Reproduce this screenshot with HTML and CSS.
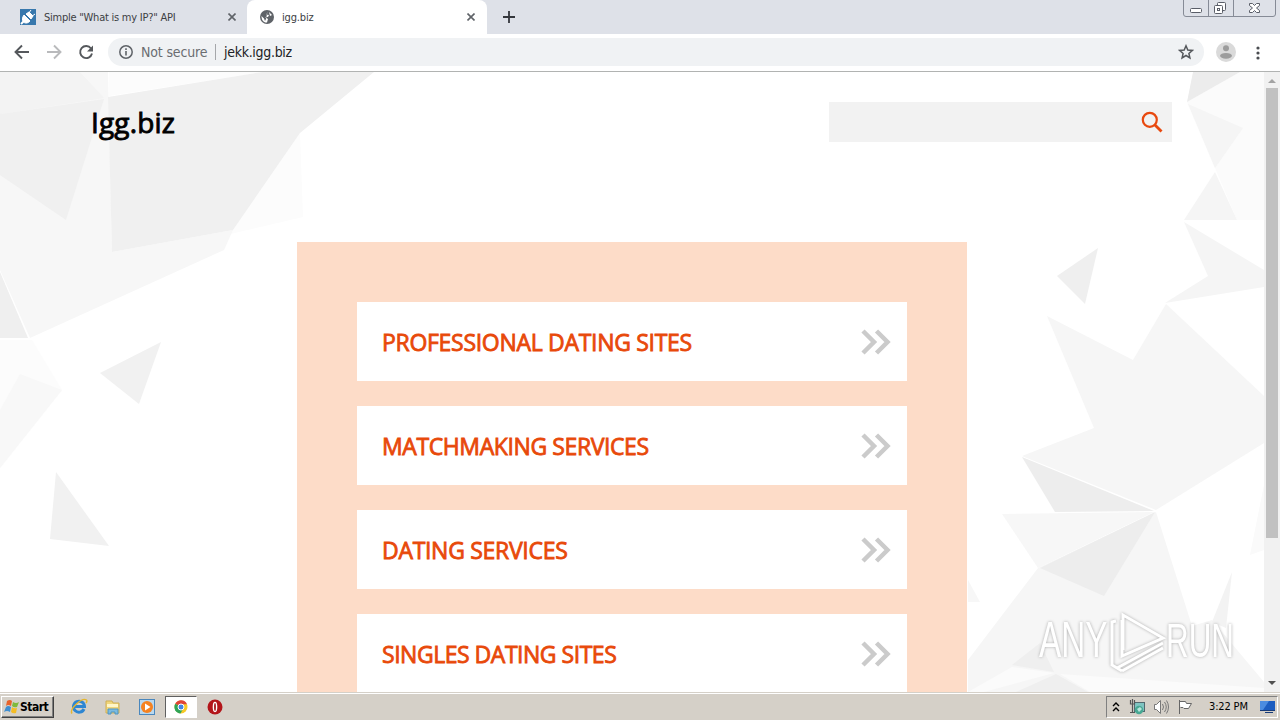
FILE: index.html
```html
<!DOCTYPE html>
<html lang="en">
  <head>
    <meta charset="UTF-8" />
    <title>igg.biz</title>
    <link rel="stylesheet" href="styles.css">
  </head>
  <body>
    <div class="tabs">
      <div class="tab">
        <svg class="favicon" width="16" height="16" viewBox="0 0 16 16"><rect width="16" height="16" fill="#3878ad"/><path d="M1 15l3.500-3.500" stroke="#fff" stroke-width="2"/><path d="M4 6l6 6c-2 2.500-5 2.500-6.500 1S2 8.500 4 6zM6 5l5 5 2-3-4-4zM8 5l3-4M11 8l4-3" fill="#fff" stroke="#fff"/></svg>
        <span class="tab-title first">Simple "What is my IP?" API</span>
        <svg class="close" width="8" height="8" viewBox="0 0 8 8"><path d="M.5.5l7 7M7.500.5l-7 7" stroke="#5f6368" stroke-width="1.600"/></svg>
      </div>
      <div class="tab active">
        <svg class="favicon" width="14" height="14" viewBox="0 0 14 14"><circle cx="7" cy="7" r="7" fill="#5f6368"/><path d="M7.500 1.500L6.500 4.500 9 5l-1 2H5l3 2-1 3.500C4 13 1.500 10.500 1.500 6L4 8.500 5 11l1-2M9 2l3 3-2 1z" fill="#fff"/></svg>
        <span class="tab-title">igg.biz</span>
        <svg class="close" width="8" height="8" viewBox="0 0 8 8"><path d="M.5.5l7 7M7.500.5l-7 7" stroke="#5f6368" stroke-width="1.600"/></svg>
      </div>
      <svg class="plus" width="12" height="12" viewBox="0 0 12 12"><path d="M6 0v12M0 6h12" stroke="#34373c" stroke-width="1.800"/></svg>
      <svg class="window-buttons" width="94" height="18" viewBox="0 0 94 18">
        <path d="M.5 0v14q0 2.500 2.500 2.500h87q2.500 0 2.500-2.500V0M25.500 0v16M50.500 0v16" fill="none" stroke="#868b96"/>
        <g fill="#fff" stroke="#5a5e68">
          <rect x="7.500" y="8.500" width="11" height="4" rx="1"/>
          <rect x="34.500" y="2.500" width="8" height="8" rx="1"/>
          <rect x="31.500" y="5.500" width="8" height="8" rx="1"/>
          <rect x="34.500" y="8.500" width="2" height="2"/>
          <path d="M66.500 3.500h3l2 2 2-2h3v2l-3 2.500 3 2.500v2h-3l-2-2-2 2h-3v-2l3-2.500-3-2.500z"/>
        </g>
      </svg>
    </div>

    <div class="toolbar">
      <svg class="nav" width="108" height="38" viewBox="0 0 108 38" fill="none" stroke-width="1.900">
        <path d="M29 18H16M22 11.500L15.500 18l6.500 6.500" stroke="#55585c"/>
        <path d="M47 18h13M54 11.500l6.500 6.500-6.500 6.500" stroke="#b9babc"/>
        <path d="M91 14.500a6 6 0 1 0 1 5" stroke="#55585c"/>
        <path d="M93 11.500v6h-6z" fill="#55585c"/>
      </svg>
      <div class="address">
        <svg width="14" height="14" viewBox="0 0 14 14"><circle cx="7" cy="7" r="6.200" fill="none" stroke="#5f6368" stroke-width="1.500"/><path d="M7 6v4.500M7 3.300v1.600" stroke="#5f6368" stroke-width="1.600"/></svg>
        <span class="insecure">Not secure</span>
        <span class="divider"></span>
        <span class="url">jekk.igg.biz</span>
        <svg class="star" width="16" height="16" viewBox="0 0 16 16"><path d="M8 1.800l1.800 4.200 4.500.4-3.400 3 1 4.500L8 11.500l-3.900 2.400 1-4.500-3.400-3 4.500-.4z" fill="none" stroke="#55585c" stroke-width="1.500"/></svg>
      </div>
      <svg class="avatar" width="20" height="20" viewBox="0 0 20 20"><circle cx="10" cy="10" r="10" fill="#dadada"/><circle cx="10" cy="6.200" r="3" fill="#9c9c9c"/><ellipse cx="10" cy="13.800" rx="6" ry="2.900" fill="#9c9c9c"/></svg>
      <svg class="dots" width="4" height="14" viewBox="0 0 4 14" fill="#4a4d51"><circle cx="2" cy="2" r="1.600"/><circle cx="2" cy="7" r="1.600"/><circle cx="2" cy="12" r="1.600"/></svg>
    </div>

    <div class="viewport">
      <div class="page">
        <svg class="backdrop" width="1264" height="620" viewBox="0 72 1264 620">
          <path d="M300 133L303 217 112 262 233 230z" fill="#fcfcfc"/>
          <path d="M0 72H108L112 252 233 230 224 250 30 338 0 270z" fill="#f7f7f7"/>
          <path d="M0 72H80L104 98 0 114z" fill="#f3f3f3"/>
          <path d="M80 72H106L105 97z" fill="#f7f7f7"/>
          <path d="M0 114L104 99 66 220 0 175z" fill="#f0f0f0"/>
          <path d="M109 72H262L109 96z" fill="#fcfcfc"/>
          <path d="M108 97L262 72H374L300 133 233 230 112 252z" fill="#f0f0f0"/>
          <path d="M0 272L28 338H0z" fill="#efefef"/>
          <path d="M0 340H32L62 390 0 468z" fill="#fcfcfc"/>
          <path d="M20 374L62 390 0 468V410z" fill="#f8f8f8"/>
          <path d="M100 373L161 342 139 404zM56 472L50 539 109 546z" fill="#f1f1f1"/>

          <path d="M1240 72H1264V220H1237L1215 168 1187 102z" fill="#fbfbfb"/>
          <path d="M1193 72H1240L1187 102z" fill="#ececec"/>
          <path d="M1188 104L1243 128 1215 168zM1215 172L1237 220H1184z" fill="#f5f5f5"/>
          <path d="M1184 222L1264 270V287L1165 303 1208 276z" fill="#f5f5f5"/>
          <path d="M1057 276L1098 248 1085 304z" fill="#efefef"/>
          <path d="M1047 316L1133 360 1166 304 1264 396V443L1156 510 1022 456 1094 428z" fill="#f6f6f6"/>
          <path d="M1022 457L1154 511 1055 512z" fill="#ededed"/>
          <path d="M1002 514L1154 512 1038 568z" fill="#f7f7f7"/>
          <path d="M1156 512L1192 626 1212 620 1264 682V692H968V660L1038 568z" fill="#f6f6f6"/>
          <path d="M1155 512L1040 568 1104 596z" fill="#ededed"/>
          <path d="M1232 572L1212 622 1226 628z" fill="#f3f3f3"/>
          <path d="M1264 485L1250 555 1264 550z" fill="#fafafa"/>
          <path d="M968 580L980 602H968z" fill="#f7f7f7"/>
          <path d="M1012 665L1040 643 1054 672zM1056 674L1016 692H1088z" fill="#efefef"/>
          <path d="M968 692L1012 667 1054 673 984 692zM1060 674L1264 688V692H1090z" fill="#fbfbfb"/>
        </svg>

        <div class="header">
          <div class="logo">Igg.biz</div>
          <div class="search">
            <svg width="22" height="22" viewBox="0 0 22 22" fill="none" stroke="#e8490f"><circle cx="8.800" cy="8.800" r="7" stroke-width="2.200"/><path d="M14 14l6.500 6.500" stroke-width="2.800"/></svg>
          </div>
        </div>

        <div class="links">
          <a class="link"><span class="wide">PROFESSIONAL DATING SITES</span><svg width="30" height="26" viewBox="0 0 30 26"><path d="M2 2l11 11L2 24M15.500 2l11 11-11 11" fill="none" stroke="#cbcbcb" stroke-width="4.500"/></svg></a>
          <a class="link"><span>MATCHMAKING SERVICES</span><svg width="30" height="26" viewBox="0 0 30 26"><path d="M2 2l11 11L2 24M15.500 2l11 11-11 11" fill="none" stroke="#cbcbcb" stroke-width="4.500"/></svg></a>
          <a class="link"><span class="wide">DATING SERVICES</span><svg width="30" height="26" viewBox="0 0 30 26"><path d="M2 2l11 11L2 24M15.500 2l11 11-11 11" fill="none" stroke="#cbcbcb" stroke-width="4.500"/></svg></a>
          <a class="link"><span class="tight">SINGLES DATING SITES</span><svg width="30" height="26" viewBox="0 0 30 26"><path d="M2 2l11 11L2 24M15.500 2l11 11-11 11" fill="none" stroke="#cbcbcb" stroke-width="4.500"/></svg></a>
        </div>

        <svg class="watermark" width="226" height="74" viewBox="0 0 226 74">
          <text transform="translate(4 51) scale(.68 1)">ANY</text>
          <text transform="translate(131 51) scale(.64 1)">RUN</text>
          <g fill="none" stroke="#fff" stroke-width="3">
            <path d="M87 14V50L128 32 88 9V44M81 15l-4 1V60M82 62L128 37M87 65L128 42M77 59l10 6"/>
          </g>
        </svg>
      </div>
      <div class="scrollbar">
        <svg width="16" height="16" viewBox="0 0 16 16"><path d="M4 11h8L8 7z" fill="#a3a3a3"/></svg>
        <div class="thumb"></div>
        <svg width="16" height="16" viewBox="0 0 16 16"><path d="M4 5h8l-4 4z" fill="#505050"/></svg>
      </div>
    </div>

    <div class="taskbar">
      <div class="start">
        <svg width="16" height="16" viewBox="0 0 16 16"><path d="M3 2q3-2 5 0L7 7Q4 5 2 7z" fill="#e8632a"/><path d="M9 3q3 2 6 0l-2 5q-3 1-5-1z" fill="#7fba3c"/><path d="M2 8q2-2 5 0l-1 5q-3-2-6 0z" fill="#3f8ed0"/><path d="M8 8q2 2 5 1l-1 5q-3 1-5-1z" fill="#f5bd24"/></svg>
        <span>Start</span>
      </div>
      <div class="task">
        <svg width="18" height="18" viewBox="0 0 18 18"><path d="M14 11a5.500 5.500 0 1 1 .5-2.500H5" fill="none" stroke="#2d86d2" stroke-width="3"/><path d="M2 15.500C-1 11 12-1 16.500 2q1 1-.5 3" fill="none" stroke="#e5b62e" stroke-width="1.400"/></svg>
      </div>
      <div class="task">
        <svg width="16" height="16" viewBox="0 0 16 16"><path d="M1 2h6l1 2h6v10H1z" fill="#f0d67c" stroke="#cfaf55"/><path d="M2 5h11v3H2z" fill="#fff6c9"/><path d="M3 15v-5h10v5h-3v-2H6v2z" fill="#7cbbe0" stroke="#4f95c4"/></svg>
      </div>
      <div class="task">
        <svg width="16" height="16" viewBox="0 0 16 16"><rect x=".5" y=".5" width="15" height="15" fill="#b9d8ee" stroke="#4a87bd"/><circle cx="8" cy="8" r="6" fill="#f58220"/><path d="M6 4.500v7L11.500 8z" fill="#fff"/></svg>
      </div>
      <div class="task current">
        <svg width="14" height="14" viewBox="0 0 14 14"><circle cx="7" cy="7" r="6.500" fill="#f7c927"/><path d="M7 7L1.200 3.800A6.500 6.500 0 0 1 13 4.200H7z" fill="#e04437"/><path d="M7 7L1.200 3.800A6.500 6.500 0 0 0 6.500 13.500L9 9z" fill="#2fa457"/><circle cx="7" cy="7" r="3" fill="#4285e4" stroke="#fff"/></svg>
      </div>
      <div class="task">
        <svg width="16" height="16" viewBox="0 0 16 16"><circle cx="8" cy="8" r="7.500" fill="#b3151a"/><ellipse cx="8" cy="8" rx="2.300" ry="5.200" fill="#fff"/><ellipse cx="8" cy="8" rx=".9" ry="4" fill="#a31217"/></svg>
      </div>
      <div class="tray">
        <svg width="8" height="10" viewBox="0 0 8 10"><path d="M1 4l3-3 3 3M1 9l3-3 3 3" fill="none" stroke="#000" stroke-width="1.400"/></svg>
        <svg class="network" width="17" height="16" viewBox="0 0 17 16"><rect x="5.500" y="3.500" width="10" height="9" fill="#7fc4c1" stroke="#52686f"/><circle cx="10" cy="11" r="4.300" fill="#48a893"/><path d="M8 10l3-2 2 2-3 3z" fill="#b9e5dc"/><path d="M1.500 1v4h4V1M3.500 0v13M1 13.500h5" fill="none" stroke="#555" stroke-width="1.200"/></svg>
        <svg class="sound" width="17" height="16" viewBox="0 0 17 16" fill="none" stroke="#777"><path d="M1.500 5.500h2l4-4v13l-4-4h-2z" fill="#fff"/><path d="M9.500 5q2 3 0 6M11.500 3q3.500 5 0 10M13.500 1.500q4 6.500 0 13"/></svg>
        <svg class="flag" width="17" height="16" viewBox="0 0 17 16"><path d="M2.500 2.500h6l1 2h5l-3 5H7l-1-1H3.500M2.500 1v14" fill="#fff" stroke="#666"/></svg>
        <span class="clock">3:22 PM</span>
        <svg width="17" height="14" viewBox="0 0 17 14"><path d="M0 1h15v9H0z" fill="#1c5dc0"/><path d="M0 1h9L3 10H0z" fill="#4b8ce0"/><path d="M0 10h15v1H0zM5 12h8v1H5z" fill="#173b78"/></svg>
      </div>
    </div>
  </body>
</html>
```
FILE: styles.css
```css
* {
  box-sizing: border-box;
}
body {
  margin: 0;
  width: 1280px;
  height: 720px;
  overflow: hidden;
  display: flex;
  flex-direction: column;
  background: #fff;
  font-family: 'DejaVu Sans Condensed', 'DejaVu Sans', sans-serif;
  font-size: 11px;
  color: #3c4043;
}
svg {
  display: block;
  flex: none;
}
span {
  white-space: nowrap;
}

/* browser tabs */
.tabs {
  height: 34px;
  background: #dee1e8;
  display: flex;
  align-items: center;
}
.tab {
  height: 34px;
  width: 247px;
  padding: 0 11px 0 20px;
  display: flex;
  align-items: center;
}
.tab.active {
  width: 240px;
  padding: 0 12px 0 13px;
  background: #fff;
  border-radius: 8px 8px 0 0;
}
.tab-title {
  margin-left: 8px;
  letter-spacing: -0.15px;
}
.tab-title.first {
  letter-spacing: -0.24px;
}
.close {
  margin-left: auto;
}
.plus {
  margin-left: 16px;
}
.window-buttons {
  margin: 0 3px 0 auto;
  align-self: flex-start;
}

/* toolbar */
.toolbar {
  height: 38px;
  display: flex;
  align-items: center;
  border-bottom: 1px solid #b1b3b2;
}
.address {
  width: 1096px;
  height: 28px;
  margin-top: -1px;
  padding: 0 10px 0 11px;
  border-radius: 14px;
  background: #f0f2f4;
  display: flex;
  align-items: center;
  font-size: 14px;
}
.insecure {
  margin-left: 8px;
  width: 67px;
  color: #6a6d71;
  letter-spacing: -0.15px;
}
.divider {
  width: 1px;
  height: 16px;
  margin: 0 8px 0 7px;
  background: #a5a7aa;
}
.url {
  color: #202124;
  letter-spacing: -0.3px;
}
.star {
  margin-left: auto;
}
.avatar {
  margin: -1px 0 0 12px;
}
.dots {
  margin-left: 20px;
}

/* page */
.viewport {
  height: 620px;
  display: flex;
}
.page {
  position: relative;
  width: 1264px;
  height: 620px;
  overflow: hidden;
  font-family: 'Open Sans', 'Noto Sans', sans-serif;
}
.backdrop {
  position: absolute;
  left: 0;
  top: 0;
}
.header {
  position: relative;
  height: 170px;
  padding: 30px 92px 0 91px;
  display: flex;
  justify-content: space-between;
}
.logo {
  color: #000;
  font-size: 28px;
  line-height: 40px;
  letter-spacing: 0.15px;
  -webkit-text-stroke: 0.9px #000;
}
.search {
  width: 343px;
  height: 40px;
  padding: 9px 9px;
  background: #f2f2f2;
  display: flex;
  justify-content: flex-end;
}
.links {
  position: relative;
  width: 670px;
  height: 520px;
  margin: 0 auto;
  padding: 60px;
  background: #fddcc8;
  display: flex;
  flex-direction: column;
  gap: 25px;
}
.link {
  flex: none;
  height: 79px;
  padding: 0 16px 0 25px;
  background: #fff;
  display: flex;
  align-items: center;
  justify-content: space-between;
  color: #e8490a;
  font-size: 23px;
  letter-spacing: -0.4px;
  -webkit-text-stroke: 0.8px #e8490a;
}
.link .wide {
  letter-spacing: -0.3px;
}
.link .tight {
  letter-spacing: -0.48px;
}
.watermark {
  position: absolute;
  left: 1035px;
  top: 534px;
  font-family: 'Liberation Sans', sans-serif;
  font-size: 49px;
  fill: #fff;
  filter: drop-shadow(0 0 1.5px #aaa);
}
.scrollbar {
  width: 16px;
  background: #f1f1f1;
  display: flex;
  flex-direction: column;
}
.thumb {
  width: 12px;
  height: 450px;
  margin: 0 2px auto;
  background: #c1c1c1;
}

/* taskbar */
.taskbar {
  height: 28px;
  padding: 0 0 0 1px;
  background: #d5d0c8;
  border-top: 1px solid #d5d0c8;
  box-shadow: inset 0 1px 0 #fff;
  display: flex;
  align-items: center;
  color: #000;
}
.start {
  width: 53px;
  height: 22px;
  margin-right: 9px;
  padding-left: 2px;
  border: 1px solid;
  border-color: #fff #404040 #404040 #fff;
  box-shadow: inset -1px -1px 0 #808080;
  display: flex;
  align-items: center;
  font-size: 12px;
  font-weight: bold;
  letter-spacing: -0.5px;
}
.task {
  width: 32px;
  height: 22px;
  margin-right: 2px;
  display: flex;
  align-items: center;
  justify-content: center;
}
.task.current {
  background: #fff;
  border: 1px solid;
  border-color: #606060 #fff #fff #606060;
}
.tray {
  width: 172px;
  height: 22px;
  margin: 0 2px 0 auto;
  padding-left: 5px;
  border: 1px solid;
  border-color: #808080 #fff #fff #808080;
  display: flex;
  align-items: center;
}
.network {
  margin-left: 9px;
}
.sound {
  margin-left: 7px;
}
.flag {
  margin-left: 7px;
}
.clock {
  width: 40px;
  margin: 0 11px 0 15px;
  letter-spacing: -0.15px;
}
```
